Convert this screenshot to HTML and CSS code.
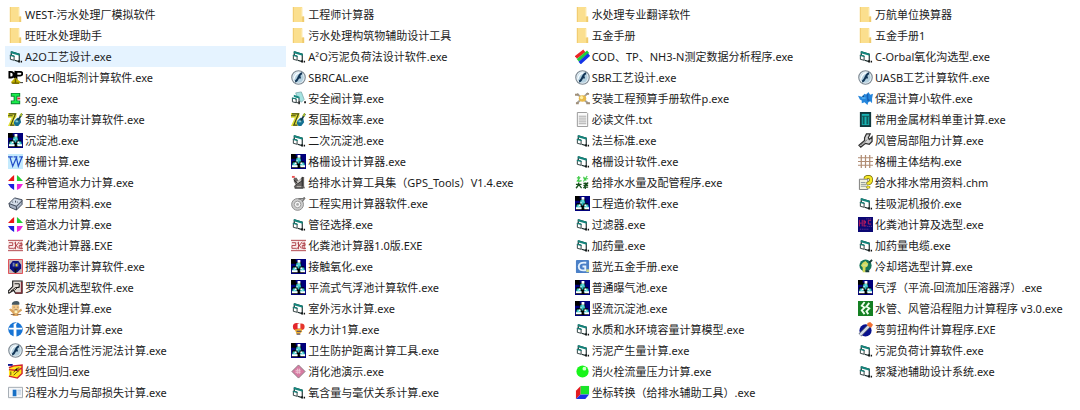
FILE: index.html
```html
<!DOCTYPE html>
<html lang="zh-CN">
<head>
<meta charset="utf-8">
<meta name="viewport" content="width=device-width, initial-scale=1">
<title>水处理软件</title>
<link rel="stylesheet" href="styles.css">
</head>
<body>
<svg class="sprites" aria-hidden="true">
  <symbol id="folder" viewBox="0 0 16 16"><path fill="#fbdf8e" d="M2 0h10v10h2v6H2z"/><path fill="#efca6c" d="M2 0h1v16H2zM12 10h2v6h-2z"/><path fill="#feebb0" d="M11 1h1v9h-1z"/></symbol>
  <symbol id="vb" viewBox="0 0 16 16"><path fill="#fff" stroke="#182a2a" stroke-width="1.200" d="M3.500 3l8.500 2.500v8l-5-1.500M3.500 3v4"/><path fill="#14857c" d="M3 2l9.500 3v2.200L3 4.500z"/><path fill="#fff" stroke="#2a3a3a" d="M2.500 6.500l4 1V12l-4-1z"/><path fill="#14857c" d="M2 6l5 1.200v1.300L2 7.400z"/><path fill="#111" d="M11 12h1.500v2.500H11zM13.500 12.500H15v2h-1.500z"/></symbol>
  <symbol id="flash" viewBox="0 0 16 16"><circle cx="8" cy="8" r="7.200" fill="#e8f1f6" stroke="#7c8892" stroke-width="1.200"/><circle cx="8" cy="8" r="5.500" fill="#b4d0df"/><path d="M3 10Q4 4 9 3" stroke="#f7fcff" stroke-width="1.500" fill="none"/><path d="M12 3.500C8 3.500 8.500 11 4.500 12.500M7 8h3.500" fill="none" stroke="#123556" stroke-width="2.200"/></symbol>
  <symbol id="cad" viewBox="0 0 16 16"><path fill="#00007c" d="M0 0h16v16H0z"/><path fill="#000" d="M0 0h5v5H0zM1 8l6-1 7 1v7H1zM5 3h6v6H5z"/><path fill="#2bb9bd" d="M6 4h4l1 4H9v2H7V8H5zM2 9h3l2 4H1zM11 9h3l1 4H9z"/><path fill="#fff" d="M7 1h3v3H7zM1 12h6v2H1zM10 12h5v2h-5zM6 6h1v2H6zM4 9h2v2H4zM10 9h2v2h-2z"/><path fill="#98f4f4" d="M8 4h1v3H8zM3 10h1v2H3zM12 10h1v2h-1z"/></symbol>
  <symbol id="koch" viewBox="0 0 16 16"><path fill="none" stroke="#000" stroke-width="2" d="M1.500 1v8M1 2h2c4 0 4 6 0 6H1M8 1l-1 8M9 1v10M10 2h3c3 0 3 4 0 4h-3"/><path fill="#c3b300" d="M5 11l3-3 3 3 3 2-3 2H6l-3-2z"/><path stroke="#695d00" stroke-width="1.500" d="M4 14h8M8 9v5"/><path fill="#222" d="M13 13h3v1h-3z"/></symbol>
  <symbol id="xg" viewBox="0 0 16 16"><path fill="#0b7f32" d="M3 2h10v4h-3v4h3v4H3v-4h3V6H3z"/><path fill="#19ef4b" d="M4 3h8v2H9v6h3v2H4v-2h3V5H4z"/><path fill="#d42830" d="M10 7h3v2h-3z"/></symbol>
  <symbol id="pump" viewBox="0 0 16 16"><path fill="#dede35" d="M0 1h9v4L6 9l1 3v3H0l4-9H0z"/><path fill="none" stroke="#464b16" stroke-width="1.300" d="M1 2h7L3 14h4M0 4h5"/><path fill="#147092" d="M7 9l3-3 3 1 1 4-3 4H8l-2-3z"/><path stroke="#153945" stroke-width="2" d="M10 10l5-8"/><path fill="#86ced5" d="M8 9h3v2H8z"/><path fill="#a0b431" d="M12 4l2-3h1v4z"/></symbol>
  <symbol id="grid-w" viewBox="0 0 16 16"><path fill="#c4eafd" d="M0 0h16v16H0z"/><path fill="none" stroke="#2450c8" stroke-width="1.300" d="M0 3h5M2 3l3 10 4-9 2 9 4-10M6 3h4M12 3h4"/></symbol>
  <symbol id="pipes" viewBox="0 0 16 16"><path fill="#ed1616" d="M6.500 0v6.500H0L4 2z"/><path fill="#23cf35" d="M9.500 0v6.500H16L12 2z"/><path fill="#1b1fe0" d="M0 9.500h6.500V16L3 13.500z"/><path fill="#ee22dc" d="M9.500 9.500H16L13 14l-3.500 2z"/></symbol>
  <symbol id="box" viewBox="0 0 16 16"><path fill="#a8b3c4" stroke="#3d4655" d="M1 8l6-6 8 2v5l-6 6-7-3z"/><path fill="#d5deea" d="M2 8l5-5 7 2-5 5z"/><path stroke="#3d4655" fill="none" d="M1 8l8 3 6-6M9 11v4M5 6v1M8 5v2M10 6v1"/></symbol>
  <symbol id="red-seal" viewBox="0 0 16 16"><path fill="#faeaea" d="M0 2h16v12H0z"/><path fill="none" stroke="#b0434b" d="M0 2.500h16M0 13.500h16M1 5h4v3H1v3h5M8 4v8M7 5l4 6M12 4L6 12M12 6h3v2h-3v3h4M14 4v8"/></symbol>
  <symbol id="mixer" viewBox="0 0 16 16"><path fill="#c9b4b6" stroke="#e0484e" d="M.5.5h15v15H.5z"/><path fill="#0b127f" d="M2 6l3-4h6l3 4v4l-4 4H6l-4-4z"/><path fill="#7483bc" d="M5 4h2v4H5zM10 4h1v4h-1z"/><path fill="#e0cd32" d="M8 5h2v3H8z"/><path fill="#111" d="M6 10h5v1H6zM7 11h2v4H7z"/></symbol>
  <symbol id="blower" viewBox="0 0 16 16"><path fill="#e2dcd6" stroke="#1e1e1e" stroke-width="1.200" d="M5 1h10v13H8l-2-3-5 3-1-2 5-5z"/><path stroke="#832c36" stroke-width="1.500" d="M14.500 2v12M8 14h6"/><path fill="none" stroke="#111" d="M7 4h5v4H8l-5 4M7 11l4-4"/></symbol>
  <symbol id="mascot" viewBox="0 0 16 16"><circle cx="8" cy="7" r="4" fill="#f0c78a"/><path fill="#475963" d="M4 4q0-4 5-4 4 0 3 4z"/><path fill="#dba45f" d="M1 9l2-1 3 2h5l3-2 1 2-4 3v3H5v-3z"/><path fill="#6c5240" d="M6 6h1v1H6zM10 6h1v1h-1zM7 9h3v1H7zM3 14h4v1H3zM10 14h4v1h-4z"/><path fill="#fff5bd" d="M7 10h3v3H7z"/></symbol>
  <symbol id="water-pipe" viewBox="0 0 16 16"><circle cx="8" cy="8" r="7.700" fill="#1875d5"/><path fill="#fff" d="M6 2l4-2Q8 3 9 6h6v2H9v8H6V8H1V6h5z"/></symbol>
  <symbol id="regression" viewBox="0 0 16 16"><path fill="#111b8f" d="M0 0h5v2H0z"/><path fill="#ffe51a" d="M1 5l5-3 9-1v9l-6 5-8-2z"/><path fill="none" stroke="#d02430" stroke-width="1.500" d="M1 4l5-2 9-1v3l-5 3-9-1M15 4v6l-5 5-9-2"/><path fill="none" stroke="#584710" d="M3 8v4M6 9l3-4 3-1M6 12l3-3 3-2"/><circle cx="9" cy="6" r="1" fill="#111"/></symbol>
  <symbol id="window" viewBox="0 0 16 16"><path fill="#f5f6f8" stroke="#9fa7af" d="M.5 2.500h15v11H.5z"/><path fill="#176fc5" d="M5 5h4v7H5z"/><path fill="#b1c8de" d="M10 5h4v1h-4zM10 7h4v1h-4zM10 9h4v1h-4z"/></symbol>
  <symbol id="valve" viewBox="0 0 16 16"><path fill="#a5e3e1" stroke="#8ab4b6" d="M5 2l6-1 3 8-3 3-4-5z"/><path fill="#fff" stroke="#29383a" d="M3.500 5.500l5 1.500v6l-3-1M1.500 7.500l4 1v4l-4-1z"/><path fill="#168c83" d="M3 4l6 2v2L3 6.500zM1 7l5 1v1L1 8z"/><path fill="#252525" d="M8 11h1.500v3H8zM14 11h2v2h-2z"/></symbol>
  <symbol id="machine" viewBox="0 0 16 16"><path fill="#686462" d="M3 3h3l2 3 4-4h2v10l1 2H4l-1-2 2-2-2-3z"/><path fill="#ed5051" d="M1 1h3v2H1z"/><path fill="#c5c2be" d="M6 7l5-3v3l-5 4zM6 12h5v1H6z"/><path stroke="#262626" d="M3 5l4 4M5 11l7-5M4 14h9M12 2v10" fill="none"/></symbol>
  <symbol id="disc" viewBox="0 0 16 16"><circle cx="7" cy="9" r="6.300" fill="#ccc" stroke="#8a8a8a"/><circle cx="7" cy="9" r="3.500" fill="#f5f5f5" stroke="#999"/><circle cx="7" cy="9" r="1.500" fill="#aaa"/><path stroke="#777" stroke-width="1.500" fill="none" d="M8 3h6V1M12 6l3-4"/></symbol>
  <symbol id="parrot" viewBox="0 0 16 16"><circle cx="6" cy="5" r="4" fill="#e3262b"/><circle cx="11" cy="5" r="3.500" fill="#e5352c"/><path fill="#fff" d="M7 2h3v5H7z"/><path fill="#efb231" d="M4 8l7-1 1 3-3 3H6z"/><path stroke="#5d526c" stroke-width="1.300" d="M6 10h5M6 13h4"/></symbol>
  <symbol id="diamond" viewBox="0 0 16 16"><path fill="#d77ba2" stroke="#8b7981" d="M8 1l7 7-7 7-7-7z"/><path stroke="#f4d6e1" stroke-width="1.300" stroke-dasharray="1 1" d="M5 7h6M5 9h6M7 5v6M9 5v6"/></symbol>
  <symbol id="rgb" viewBox="0 0 16 16"><path stroke="#eb2527" stroke-width="3.600" d="M1 9l9-7"/><path stroke="#20cf3b" stroke-width="3.600" d="M3 12l11-9"/><path stroke="#1434e8" stroke-width="3.600" d="M5 15l10-9"/></symbol>
  <symbol id="tools" viewBox="0 0 16 16"><path fill="none" stroke="#a5a29c" stroke-width="2" d="M2 3l12 10M14 2L2 13"/><ellipse cx="8" cy="8" rx="4" ry="3.500" fill="#e8b94b"/><circle cx="7" cy="7" r="1.800" fill="#fff0a4"/><path fill="#a08f78" d="M0 3h4v2H0zM12 2h3v2h-3zM1 12h3v2H1zM12 12h4v2h-4z"/></symbol>
  <symbol id="text" viewBox="0 0 16 16"><path fill="#fafafa" stroke="#959595" d="M2.500.5h10l1 1v14h-11z"/><path stroke="#a5a5a5" d="M4 4.500h8M4 6.500h8M4 8.500h8M4 10.500h8M4 12.500h8"/></symbol>
  <symbol id="water-big" viewBox="0 0 16 16"><path fill="none" stroke="#41cc48" stroke-width="1.200" d="M2 3h3L2 7M4 1v6l3-1M9 2l3 4M13 1L9 7M9 4h5"/><path fill="none" stroke="#174f1c" stroke-width="1.300" d="M1 10h6M4 8q0 4-3 6M4 10l3 4M9 9h5M9 11h5M11 8v7M14 8l-5 6M10 13h4"/></symbol>
  <symbol id="blue-g" viewBox="0 0 16 16"><rect x="1" y="1" width="14" height="14" rx="1" fill="#4b80c7"/><path fill="none" stroke="#e5f2ff" stroke-width="2" d="M12 4Q4 3 4 8t7 4V8H8"/><path fill="#d3dc8d" d="M12 11h3v3h-3z"/></symbol>
  <symbol id="green-ball" viewBox="0 0 16 16"><circle cx="8" cy="8" r="6.500" fill="#18f51a"/><circle cx="10" cy="5" r="2" fill="#d4ffd0"/></symbol>
  <symbol id="cube" viewBox="0 0 16 16"><path fill="#e31b20" d="M1 6l5-5v9l-5 5z"/><path fill="#19e52a" d="M6 1h9v9H6z"/><path fill="#1932e7" d="M6 10h9l-4 5H1z"/></symbol>
  <symbol id="fish" viewBox="0 0 16 16"><path fill="#2586dc" d="M0 5l4 1 3-3 2 1 2-3 2 3 3-1-1 5v5l-2-2-2 1-1 3-3-3-3 1v-3L2 9z"/><path fill="#1662b9" d="M9 3h2v5l2 2-3 1z"/><path fill="#73cbff" d="M4 7h4v1H4z"/><path fill="#111" d="M5 5h1v1H5z"/></symbol>
  <symbol id="metal" viewBox="0 0 16 16"><path fill="#12383c" d="M2 0h12v16H2z"/><path fill="#18b3b4" d="M4 2h8v12H4z"/><path fill="#105c5d" d="M4 4h8v1H4zM5 5h2v8H5zM9 5h2v8H9z"/></symbol>
  <symbol id="wrench" viewBox="0 0 16 16"><path fill="#d2d2d2" stroke="#303030" stroke-width="1.300" d="M7 5l2-4h4l-2 4 1 2 3-3v5l-3 3-4-1-5 4-2-2 6-5z"/><path stroke="#777" d="M3 13l7-6"/></symbol>
  <symbol id="lattice" viewBox="0 0 16 16"><path fill="none" stroke="#b08c73" stroke-width="1.300" d="M3.500 1v14M8 1v14M12.500 1v14M0 4h16M0 8h16M0 12h16"/></symbol>
  <symbol id="help" viewBox="0 0 16 16"><path fill="#f3f3de" stroke="#797979" d="M1.500 4.500h9v11h-9z"/><path stroke="#8f9997" d="M3 8h5M3 10h6M3 12h6"/><path fill="none" stroke="#716600" stroke-width="4" d="M8 4Q8 2 11 2t3 3-3 4v1M11 12v2"/><path fill="none" stroke="#f5e829" stroke-width="2.600" d="M8 4Q8 2 11 2t3 3-3 4v1M11 12v2"/></symbol>
  <symbol id="tank" viewBox="0 0 16 16"><path fill="#0a0874" d="M0 0h16v16H0z"/><path fill="none" stroke="#c01d5c" d="M1.500 3v7M1 6.500h3M4.500 3v7M6.500 3v7M6 4.500h2v2H6M6 9.500h3M14 3.500h-3v4h3"/><path stroke="#823e96" stroke-dasharray="1 1" d="M9 2h5M10 10h5M2 13h10"/></symbol>
  <symbol id="tower" viewBox="0 0 16 16"><circle cx="8" cy="7" r="6.500" fill="#16745a"/><path fill="#d2d95b" d="M5 4l3-2 3 3-1 3-2 1v5H5V9L3 7z"/><path stroke="#193c39" stroke-width="2" d="M8 13h4M12 4l3-3"/><path fill="#cce7b4" d="M5 6h5v1H5z"/></symbol>
  <symbol id="duct" viewBox="0 0 16 16"><path fill="#158023" d="M0 0h16v16H0z"/><path fill="none" stroke="#f0fff0" stroke-width="2" d="M7 1L4 5l3 2-3 3 3 4M12 2L9 6l3 2-3 3 2 3"/></symbol>
  <symbol id="torsion" viewBox="0 0 16 16"><circle cx="8" cy="9" r="6.500" fill="#07108d"/><path stroke="#5b6370" stroke-width="4" d="M2 14L12 4"/><path stroke="#d4dceb" stroke-width="2.500" d="M2 14L12 4"/><path fill="#f17133" d="M10 1l3-1 3 3-2 3-4-2z"/></symbol>
</svg>
<main class="explorer">
<ul class="files">
<li><a class="file" href="#"><svg class="icon"><use href="#folder"/></svg>WEST-污水处理厂模拟软件</a></li>
<li><a class="file" href="#"><svg class="icon"><use href="#folder"/></svg>工程师计算器</a></li>
<li><a class="file" href="#"><svg class="icon"><use href="#folder"/></svg>水处理专业翻译软件</a></li>
<li><a class="file" href="#"><svg class="icon"><use href="#folder"/></svg>万航单位换算器</a></li>
<li><a class="file" href="#"><svg class="icon"><use href="#folder"/></svg>旺旺水处理助手</a></li>
<li><a class="file" href="#"><svg class="icon"><use href="#folder"/></svg>污水处理构筑物辅助设计工具</a></li>
<li><a class="file" href="#"><svg class="icon"><use href="#folder"/></svg>五金手册</a></li>
<li><a class="file" href="#"><svg class="icon"><use href="#folder"/></svg>五金手册1</a></li>
<li><a class="file file-active" href="#"><svg class="icon"><use href="#vb"/></svg>A2O工艺设计.exe</a></li>
<li><a class="file" href="#"><svg class="icon"><use href="#vb"/></svg>A²O污泥负荷法设计软件.exe</a></li>
<li><a class="file" href="#"><svg class="icon"><use href="#rgb"/></svg>COD、TP、NH3-N测定数据分析程序.exe</a></li>
<li><a class="file" href="#"><svg class="icon"><use href="#vb"/></svg>C-Orbal氧化沟选型.exe</a></li>
<li><a class="file" href="#"><svg class="icon"><use href="#koch"/></svg>KOCH阻垢剂计算软件.exe</a></li>
<li><a class="file" href="#"><svg class="icon"><use href="#flash"/></svg>SBRCAL.exe</a></li>
<li><a class="file" href="#"><svg class="icon"><use href="#flash"/></svg>SBR工艺设计.exe</a></li>
<li><a class="file" href="#"><svg class="icon"><use href="#flash"/></svg>UASB工艺计算软件.exe</a></li>
<li><a class="file" href="#"><svg class="icon"><use href="#xg"/></svg>xg.exe</a></li>
<li><a class="file" href="#"><svg class="icon"><use href="#valve"/></svg>安全阀计算.exe</a></li>
<li><a class="file" href="#"><svg class="icon"><use href="#tools"/></svg>安装工程预算手册软件p.exe</a></li>
<li><a class="file" href="#"><svg class="icon"><use href="#fish"/></svg>保温计算小软件.exe</a></li>
<li><a class="file" href="#"><svg class="icon"><use href="#pump"/></svg>泵的轴功率计算软件.exe</a></li>
<li><a class="file" href="#"><svg class="icon"><use href="#pump"/></svg>泵国标效率.exe</a></li>
<li><a class="file" href="#"><svg class="icon"><use href="#text"/></svg>必读文件.txt</a></li>
<li><a class="file" href="#"><svg class="icon"><use href="#metal"/></svg>常用金属材料单重计算.exe</a></li>
<li><a class="file" href="#"><svg class="icon"><use href="#cad"/></svg>沉淀池.exe</a></li>
<li><a class="file" href="#"><svg class="icon"><use href="#vb"/></svg>二次沉淀池.exe</a></li>
<li><a class="file" href="#"><svg class="icon"><use href="#vb"/></svg>法兰标准.exe</a></li>
<li><a class="file" href="#"><svg class="icon"><use href="#wrench"/></svg>风管局部阻力计算.exe</a></li>
<li><a class="file" href="#"><svg class="icon"><use href="#grid-w"/></svg>格栅计算.exe</a></li>
<li><a class="file" href="#"><svg class="icon"><use href="#cad"/></svg>格栅设计计算器.exe</a></li>
<li><a class="file" href="#"><svg class="icon"><use href="#vb"/></svg>格栅设计软件.exe</a></li>
<li><a class="file" href="#"><svg class="icon"><use href="#lattice"/></svg>格栅主体结构.exe</a></li>
<li><a class="file" href="#"><svg class="icon"><use href="#pipes"/></svg>各种管道水力计算.exe</a></li>
<li><a class="file" href="#"><svg class="icon"><use href="#machine"/></svg>给排水计算工具集（GPS_Tools）V1.4.exe</a></li>
<li><a class="file" href="#"><svg class="icon"><use href="#water-big"/></svg>给排水水量及配管程序.exe</a></li>
<li><a class="file" href="#"><svg class="icon"><use href="#help"/></svg>给水排水常用资料.chm</a></li>
<li><a class="file" href="#"><svg class="icon"><use href="#box"/></svg>工程常用资料.exe</a></li>
<li><a class="file" href="#"><svg class="icon"><use href="#disc"/></svg>工程实用计算器软件.exe</a></li>
<li><a class="file" href="#"><svg class="icon"><use href="#cad"/></svg>工程造价软件.exe</a></li>
<li><a class="file" href="#"><svg class="icon"><use href="#vb"/></svg>挂吸泥机报价.exe</a></li>
<li><a class="file" href="#"><svg class="icon"><use href="#pipes"/></svg>管道水力计算.exe</a></li>
<li><a class="file" href="#"><svg class="icon"><use href="#vb"/></svg>管径选择.exe</a></li>
<li><a class="file" href="#"><svg class="icon"><use href="#vb"/></svg>过滤器.exe</a></li>
<li><a class="file" href="#"><svg class="icon"><use href="#tank"/></svg>化粪池计算及选型.exe</a></li>
<li><a class="file" href="#"><svg class="icon"><use href="#red-seal"/></svg>化粪池计算器.EXE</a></li>
<li><a class="file" href="#"><svg class="icon"><use href="#red-seal"/></svg>化粪池计算器1.0版.EXE</a></li>
<li><a class="file" href="#"><svg class="icon"><use href="#vb"/></svg>加药量.exe</a></li>
<li><a class="file" href="#"><svg class="icon"><use href="#vb"/></svg>加药量电缆.exe</a></li>
<li><a class="file" href="#"><svg class="icon"><use href="#mixer"/></svg>搅拌器功率计算软件.exe</a></li>
<li><a class="file" href="#"><svg class="icon"><use href="#cad"/></svg>接触氧化.exe</a></li>
<li><a class="file" href="#"><svg class="icon"><use href="#blue-g"/></svg>蓝光五金手册.exe</a></li>
<li><a class="file" href="#"><svg class="icon"><use href="#tower"/></svg>冷却塔选型计算.exe</a></li>
<li><a class="file" href="#"><svg class="icon"><use href="#blower"/></svg>罗茨风机选型软件.exe</a></li>
<li><a class="file" href="#"><svg class="icon"><use href="#cad"/></svg>平流式气浮池计算软件.exe</a></li>
<li><a class="file" href="#"><svg class="icon"><use href="#cad"/></svg>普通曝气池.exe</a></li>
<li><a class="file" href="#"><svg class="icon"><use href="#cad"/></svg>气浮（平流-回流加压溶器浮）.exe</a></li>
<li><a class="file" href="#"><svg class="icon"><use href="#mascot"/></svg>软水处理计算.exe</a></li>
<li><a class="file" href="#"><svg class="icon"><use href="#vb"/></svg>室外污水计算.exe</a></li>
<li><a class="file" href="#"><svg class="icon"><use href="#cad"/></svg>竖流沉淀池.exe</a></li>
<li><a class="file" href="#"><svg class="icon"><use href="#duct"/></svg>水管、风管沿程阻力计算程序 v3.0.exe</a></li>
<li><a class="file" href="#"><svg class="icon"><use href="#water-pipe"/></svg>水管道阻力计算.exe</a></li>
<li><a class="file" href="#"><svg class="icon"><use href="#parrot"/></svg>水力计1算.exe</a></li>
<li><a class="file" href="#"><svg class="icon"><use href="#vb"/></svg>水质和水环境容量计算模型.exe</a></li>
<li><a class="file" href="#"><svg class="icon"><use href="#torsion"/></svg>弯剪扭构件计算程序.EXE</a></li>
<li><a class="file" href="#"><svg class="icon"><use href="#flash"/></svg>完全混合活性污泥法计算.exe</a></li>
<li><a class="file" href="#"><svg class="icon"><use href="#cad"/></svg>卫生防护距离计算工具.exe</a></li>
<li><a class="file" href="#"><svg class="icon"><use href="#vb"/></svg>污泥产生量计算.exe</a></li>
<li><a class="file" href="#"><svg class="icon"><use href="#vb"/></svg>污泥负荷计算软件.exe</a></li>
<li><a class="file" href="#"><svg class="icon"><use href="#regression"/></svg>线性回归.exe</a></li>
<li><a class="file" href="#"><svg class="icon"><use href="#diamond"/></svg>消化池演示.exe</a></li>
<li><a class="file" href="#"><svg class="icon"><use href="#green-ball"/></svg>消火栓流量压力计算.exe</a></li>
<li><a class="file" href="#"><svg class="icon"><use href="#vb"/></svg>絮凝池辅助设计系统.exe</a></li>
<li><a class="file" href="#"><svg class="icon"><use href="#window"/></svg>沿程水力与局部损失计算.exe</a></li>
<li><a class="file" href="#"><svg class="icon"><use href="#vb"/></svg>氧含量与毫伏关系计算.exe</a></li>
<li><a class="file" href="#"><svg class="icon"><use href="#cube"/></svg>坐标转换（给排水辅助工具）.exe</a></li>
</ul>
</main>
</body>
</html>
```
FILE: styles.css
```css
* {
  box-sizing: border-box;
}

body {
  margin: 0;
  background: #fff;
  color: #1c1c1c;
  font-family: "Noto Sans", "Noto Sans CJK SC", sans-serif;
  font-size: 11px;
  line-height: 21px;
}

.sprites {
  display: none;
}

.explorer {
  padding: 4px 0 4px 5px;
}

.files {
  display: grid;
  grid-template-columns: 5fr 5fr 5fr 4fr;
  column-gap: 2px;
  margin: 0;
  padding: 0;
  list-style: none;
}

.file {
  display: flex;
  align-items: center;
  gap: 2px;
  padding-left: 3px;
  color: inherit;
  text-decoration: none;
  white-space: nowrap;
}

.file:hover,
.file-active {
  background: #e5f3ff;
}

.icon {
  flex: none;
  width: 15px;
  height: 15px;
}
```
